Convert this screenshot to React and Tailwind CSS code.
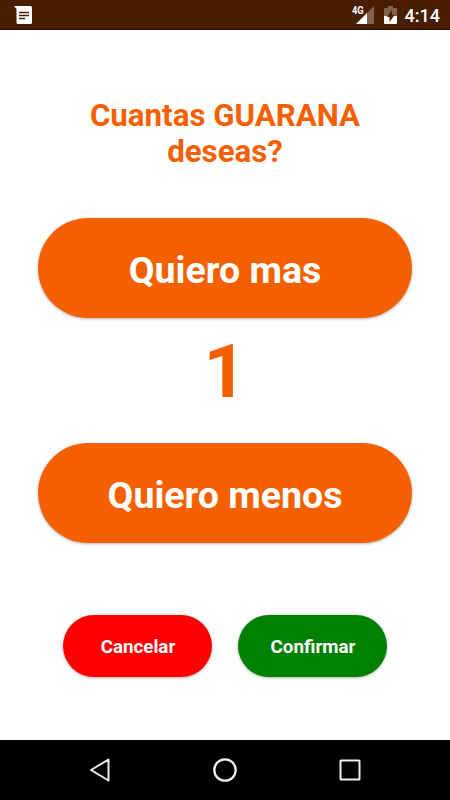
import React, { useState } from "react";

function StatusBar() {
  return (
    <header className="flex h-[30px] items-center justify-between border-b border-[#2b1000] bg-[#491d00] pl-[14px] pr-[10px] text-white">
      <svg width="19" height="20" viewBox="0 0 19 20">
        <path d="M0 1h16.500a1.500 1.500 0 0 1 1.500 1.500v15a1.500 1.500 0 0 1-1.500 1.500h-12.500a1.500 1.500 0 0 1-1.500-1.500V4z" fill="#fff" />
        <path d="M5 7.500h10M5 10.500h10M5 13.500h6" stroke="#491d00" strokeWidth="1.400" />
      </svg>

      <div className="flex items-center">
        {/* Signal */}
        <div className="relative mr-[10px] mt-px h-[18px] w-[18px]">
          <svg width="18" height="18" viewBox="0 0 18 18">
            <path d="M18 0v18H0z" fill="#fff" fillOpacity=".3" />
            <path d="M11 7v11H0z" fill="#fff" />
          </svg>
          <span className="absolute -left-[4px] top-0 h-[9px] origin-left scale-x-85 bg-[#491d00] text-[11px] font-bold leading-[9px]">
            4G
          </span>
        </div>

        {/* Battery */}
        <svg width="13" height="18" viewBox="0 0 13 18" className="mr-[8px] mt-px">
          <path d="M4 0h5v2h3q1 0 1 1v7H0V3q0-1 1-1h3z" fill="#fff" fillOpacity=".3" />
          <path d="M0 10h13v7q0 1-1 1H1q-1 0-1-1z" fill="#fff" />
          <path d="M8 4v5h2.500L5.500 16v-5H3z" fill="#491d00" />
        </svg>

        <span className="mt-[2px] text-[18px] font-medium leading-none">4:14</span>
      </div>
    </header>
  );
}

function NavBar() {
  return (
    <nav className="flex h-[60px] items-center justify-between bg-black px-[87px] text-[#eeeeee]">
      <svg width="26" height="26" viewBox="0 0 26 26" fill="none" stroke="currentColor" strokeWidth="2" strokeLinejoin="round">
        <path d="M21.500 2.500v21L4 13z" />
      </svg>
      <svg width="26" height="26" viewBox="0 0 26 26" fill="none" stroke="currentColor" strokeWidth="2.300">
        <circle cx="13" cy="13" r="10.700" />
      </svg>
      <svg width="26" height="26" viewBox="0 0 26 26" fill="none" stroke="currentColor" strokeWidth="2">
        <rect x="3.500" y="3.500" width="19" height="19" rx="0.500" />
      </svg>
    </nav>
  );
}

export default function App() {
  const [count, setCount] = useState(1);

  return (
    <div className="flex h-[800px] w-[450px] flex-col bg-white font-['Roboto',sans-serif]">
      <StatusBar />

      <main className="flex flex-1 flex-col items-center pt-[68px]">
        <h1 className="h-[73px] w-[300px] text-center text-[31.250px] font-bold leading-[36px] text-[#f46000]">
          Cuantas GUARANA deseas?
        </h1>

        <button
          onClick={() => setCount(count + 1)}
          className="mt-[47px] h-[100px] w-[374px] rounded-full bg-[#f46000] pt-[4px] text-[37.500px] font-bold text-white shadow-[0_1px_3px_rgba(0,0,0,0.3)]"
        >
          Quiero mas
        </button>

        <div className="flex h-[125px] items-start pt-[16px] text-[75px] font-bold leading-none text-[#f46000]">
          {count}
        </div>

        <button
          onClick={() => setCount(Math.max(1, count - 1))}
          className="h-[100px] w-[374px] rounded-full bg-[#f46000] pt-[4px] text-[37.500px] font-bold text-white shadow-[0_1px_3px_rgba(0,0,0,0.3)]"
        >
          Quiero menos
        </button>

        <div className="mt-[72px] flex gap-[26px]">
          <button className="h-[62px] w-[149px] rounded-full bg-[#ff0000] pt-[3px] pl-px text-[18.750px] font-bold text-white shadow-[0_1px_3px_rgba(0,0,0,0.3)]">
            Cancelar
          </button>
          <button className="h-[62px] w-[149px] rounded-full bg-[#008000] pt-[3px] pl-px text-[18.750px] font-bold text-white shadow-[0_1px_3px_rgba(0,0,0,0.3)]">
            Confirmar
          </button>
        </div>
      </main>

      <NavBar />
    </div>
  );
}
